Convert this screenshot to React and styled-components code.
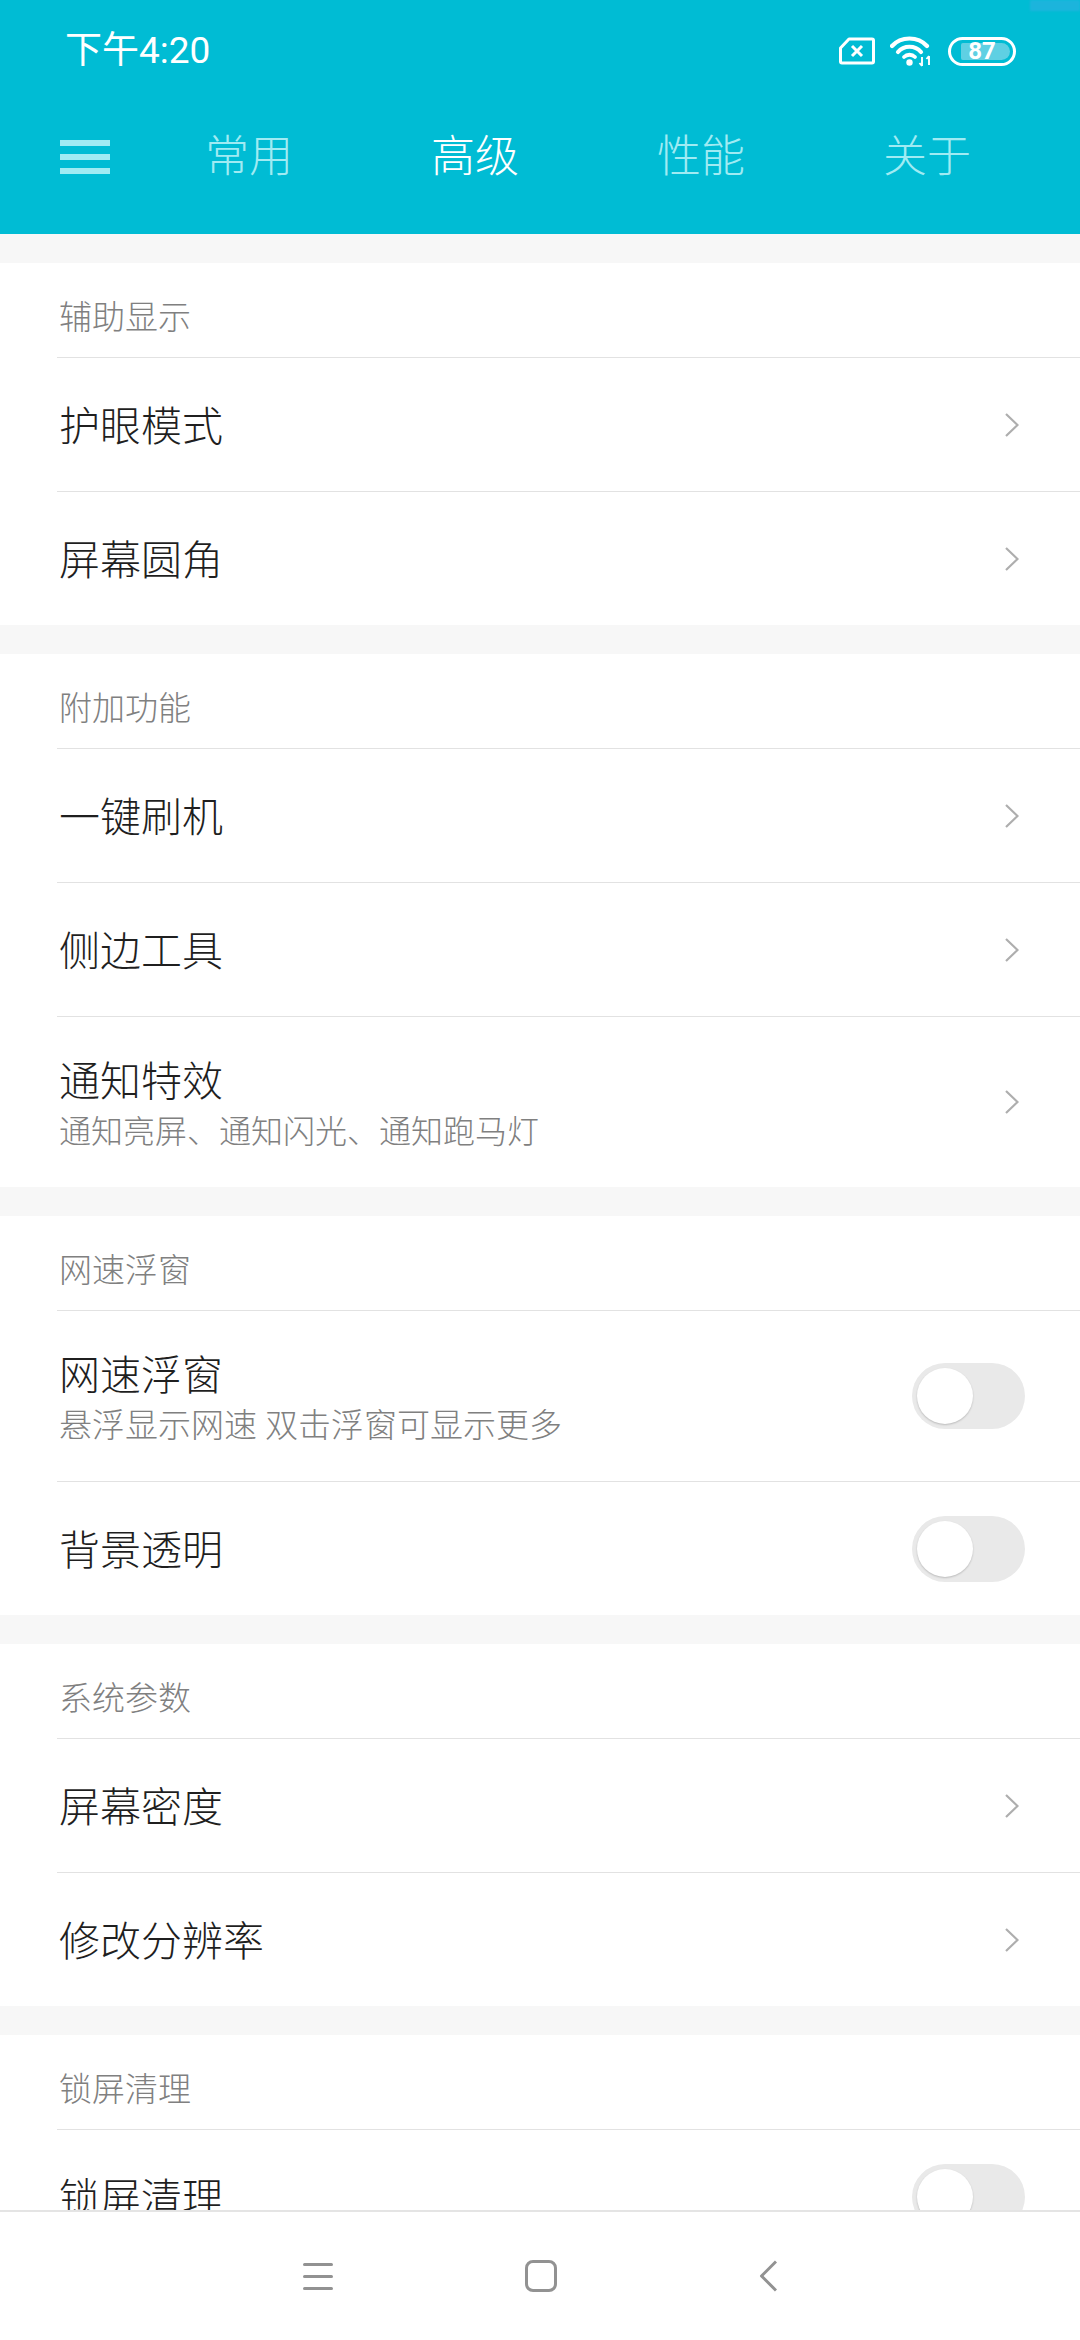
import styled, { createGlobalStyle } from "styled-components";

const GlobalStyle = createGlobalStyle`
  html, body {
    margin: 0;
    padding: 0;
    background: #f7f7f7;
  }
  * {
    box-sizing: border-box;
  }
`;

const FONT = `Roboto, "Noto Sans CJK SC", sans-serif`;

const groups = [
  {
    title: "辅助显示",
    rows: [{ name: "护眼模式" }, { name: "屏幕圆角" }],
  },
  {
    title: "附加功能",
    rows: [
      { name: "一键刷机" },
      { name: "侧边工具" },
      { name: "通知特效", sub: "通知亮屏、通知闪光、通知跑马灯", subSize: 32 },
    ],
  },
  {
    title: "网速浮窗",
    rows: [
      { name: "网速浮窗", sub: "悬浮显示网速 双击浮窗可显示更多", subSize: 33, toggle: true },
      { name: "背景透明", toggle: true },
    ],
  },
  {
    title: "系统参数",
    rows: [{ name: "屏幕密度" }, { name: "修改分辨率" }],
  },
  {
    title: "锁屏清理",
    rows: [{ name: "锁屏清理", toggle: true }],
  },
];

const tabs = ["常用", "高级", "性能", "关于"];

function SimIcon() {
  return (
    <svg width="36" height="28" viewBox="0 0 36 28" fill="none" stroke="#fff" strokeWidth="3">
      <path d="M10 2 H33 a1.5 1.5 0 0 1 1.5 1.5 V24.5 a1.5 1.5 0 0 1 -1.5 1.5 H3 a1.5 1.5 0 0 1 -1.5 -1.5 V11 Z" strokeLinejoin="round" />
      <path d="M13 9 L23 19 M23 9 L13 19" strokeWidth="3" />
    </svg>
  );
}

function WifiIcon() {
  return (
    <svg width="42" height="31" viewBox="0 0 42 31" fill="none" stroke="#fff" strokeLinecap="round">
      <path d="M2 10 C11 0 28 0 37 10" strokeWidth="4.2" />
      <path d="M8 16 C14 9 25 9 31 16" strokeWidth="4.2" />
      <path d="M14 21 C17 18 22 18 25 21" strokeWidth="3.8" />
      <circle cx="19.5" cy="26.5" r="3.2" fill="#fff" stroke="none" />
      <path d="M32 21 V30 M29.5 27 L32 30 M39 20 V29 M36.5 23 L39 20" strokeWidth="1.9" strokeLinecap="butt" />
    </svg>
  );
}

function Battery({ level }) {
  return (
    <BatteryShell>
      <BatteryFill />
      <BatteryText>{level}</BatteryText>
    </BatteryShell>
  );
}

function Chevron() {
  return (
    <svg width="14" height="26" viewBox="0 0 14 26" fill="none" stroke="#aeaeae" strokeWidth="2.2">
      <path d="M1 2 L12.5 13 L1 24" />
    </svg>
  );
}

function App() {
  return (
    <>
      <GlobalStyle />
      <Screen>
        <Header>
          <SignalBlur />
          <StatusBar>
            <Time>下午4:20</Time>
            <StatusIcons>
              <SimIcon />
              <WifiIcon />
              <Battery level="87" />
            </StatusIcons>
          </StatusBar>
          <TabBar>
            <MenuButton>
              <span />
              <span />
              <span />
            </MenuButton>
            <Tabs>
              {tabs.map((tab) => (
                <Tab key={tab} $active={tab === "高级"}>
                  {tab}
                </Tab>
              ))}
            </Tabs>
          </TabBar>
        </Header>
        <Content>
          {groups.map((group, index) => (
            <Group key={index}>
              <GroupTitle>{group.title}</GroupTitle>
              {group.rows.map((row) => (
                <Row key={row.name} $tall={!!row.sub}>
                  <RowText>
                    <RowName>{row.name}</RowName>
                    {row.sub && <RowSub $size={row.subSize}>{row.sub}</RowSub>}
                  </RowText>
                  {row.toggle ? (
                    <Toggle>
                      <Knob />
                    </Toggle>
                  ) : (
                    <ChevronSlot>
                      <Chevron />
                    </ChevronSlot>
                  )}
                </Row>
              ))}
            </Group>
          ))}
        </Content>
        <NavBar>
          <NavLines>
            <span />
            <span />
            <span />
          </NavLines>
          <NavHome />
          <NavBack width="18" height="32" viewBox="0 0 18 32" fill="none" stroke="#929292" strokeWidth="3">
            <path d="M17 1.5 L2.5 16 L17 30.5" strokeLinejoin="round" />
          </NavBack>
        </NavBar>
      </Screen>
    </>
  );
}

const Screen = styled.div`
  width: 1080px;
  height: 2340px;
  display: flex;
  flex-direction: column;
  overflow: hidden;
  background: #f7f7f7;
  font-family: ${FONT};
`;

const Header = styled.header`
  position: relative;
  height: 234px;
  flex: none;
  background: #00bcd4;
  color: #fff;
`;

const SignalBlur = styled.div`
  position: absolute;
  top: 0;
  right: 0;
  width: 50px;
  height: 11px;
  background: #1cb4dc;
  filter: blur(1px);
`;

const StatusBar = styled.div`
  height: 102px;
  padding: 0 64px 0 65px;
  display: flex;
  align-items: center;
  justify-content: space-between;
`;

const Time = styled.div`
  font-size: 37px;
  line-height: 102px;
  font-weight: 400;
`;

const StatusIcons = styled.div`
  display: flex;
  align-items: center;
  gap: 15px;
`;

const BatteryShell = styled.div`
  position: relative;
  width: 68px;
  height: 29px;
  margin-left: 1px;
  border: 3px solid #fff;
  border-radius: 15px;
  padding: 3px;
`;

const BatteryFill = styled.div`
  height: 100%;
  width: 87%;
  margin-left: 7px;
  background: #5fd0e3;
  border-radius: 2px 9px 9px 2px;
`;

const BatteryText = styled.span`
  position: absolute;
  left: 0;
  right: 0;
  top: 0;
  bottom: 0;
  display: flex;
  align-items: center;
  justify-content: center;
  font-size: 24px;
  font-weight: 700;
  color: #fff;
`;

const TabBar = styled.div`
  display: flex;
  align-items: center;
  height: 108px;
  padding-left: 60px;
`;

const MenuButton = styled.div`
  width: 50px;
  height: 34px;
  flex: none;
  margin-top: 2px;
  display: flex;
  flex-direction: column;
  justify-content: space-between;

  span {
    display: block;
    height: 6px;
    background: #a0ebf3;
  }
`;

const Tabs = styled.nav`
  display: grid;
  grid-template-columns: repeat(4, 226px);
  margin: 0 0 6px 26px;
`;

const Tab = styled.div`
  text-align: center;
  font-size: 44px;
  font-weight: 300;
  color: ${(p) => (p.$active ? "#ffffff" : "#a0ebf3")};
`;

const Content = styled.main`
  flex: 1;
  min-height: 0;
  overflow: hidden;
  padding-top: 29px;
  display: flex;
  flex-direction: column;
  gap: 29px;
`;

const Group = styled.section`
  flex: none;
  background: #fff;
  padding-left: 57px;
`;

const GroupTitle = styled.div`
  height: 95px;
  padding: 10px 0 0 2px;
  display: flex;
  align-items: center;
  font-size: 33px;
  font-weight: 300;
  color: #808080;
  border-bottom: 1px solid #e2e2e2;
`;

const Row = styled.div`
  height: ${(p) => (p.$tall ? "171px" : "134px")};
  display: flex;
  align-items: center;
  justify-content: space-between;
  padding: 0 55px 0 2px;
  border-bottom: 1px solid #e2e2e2;

  &:last-child {
    height: ${(p) => (p.$tall ? "170px" : "133px")};
    border-bottom: none;
  }
`;

const RowText = styled.div`
  display: flex;
  flex-direction: column;
  padding-top: 4px;
`;

const RowName = styled.div`
  font-size: 41px;
  line-height: 54px;
  font-weight: 300;
  color: #1f1f1f;
`;

const RowSub = styled.div`
  margin-top: 1px;
  font-size: ${(p) => p.$size}px;
  line-height: 44px;
  font-weight: 300;
  color: #808080;
`;

const ChevronSlot = styled.div`
  display: flex;
  margin-right: 6px;
`;

const Toggle = styled.div`
  width: 113px;
  height: 66px;
  border-radius: 33px;
  background: #e9e9e9;
  padding: 5px;
`;

const Knob = styled.div`
  width: 56px;
  height: 56px;
  border-radius: 50%;
  background: #fff;
  box-shadow: 0 1px 2px rgba(0, 0, 0, 0.2);
`;

const NavBar = styled.footer`
  height: 130px;
  flex: none;
  background: #fff;
  border-top: 2px solid #e4e4e4;
  display: flex;
  align-items: center;
  justify-content: center;
  gap: 192px;
`;

const NavLines = styled.div`
  width: 30px;
  height: 27px;
  display: flex;
  flex-direction: column;
  justify-content: space-between;

  span {
    display: block;
    height: 3px;
    border-radius: 2px;
    background: #929292;
  }
`;

const NavHome = styled.div`
  width: 32px;
  height: 32px;
  border: 3px solid #929292;
  border-radius: 8px;
`;

const NavBack = styled.svg`
  margin-left: 10px;
`;

export default App;
